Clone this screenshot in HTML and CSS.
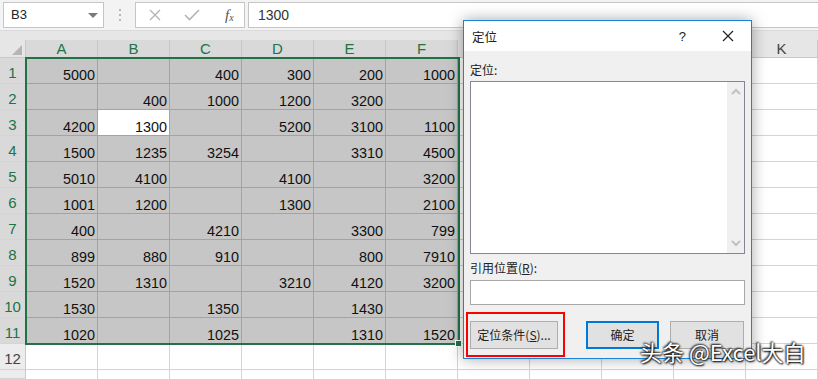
FILE: index.html
```html
<!DOCTYPE html>
<html lang="zh-CN">
<head>
    <meta charset="UTF-8">
    <title>定位</title>
    <link rel="stylesheet" href="styles.css">
</head>
<body>
    <div class="formula-bar">
        <div class="name-box">B3<span class="caret"></span></div>
        <div class="grip"><i></i><i></i><i></i></div>
        <div class="fn-box">
            <svg class="fn-icon" width="12" height="12" viewBox="0 0 12 12"><path d="M1 1L11 11M11 1L1 11" stroke="#b4b4b4" stroke-width="1.4" fill="none"/></svg>
            <svg class="fn-icon" width="16" height="12" viewBox="0 0 16 12"><path d="M1 6L5.5 10.5L15 1" stroke="#b4b4b4" stroke-width="1.6" fill="none"/></svg>
            <span class="fx">f<sub>x</sub></span>
        </div>
        <div class="formula-input">1300</div>
    </div>
    <div class="strip"></div>

    <div class="sheet" id="sheet">
        <div class="selection"></div>
        <div class="fill-handle"></div>
    </div>

    <div class="dialog">
        <div class="dialog-title">
            <span>定位</span>
            <span class="help">?</span>
            <svg class="close" width="12" height="12" viewBox="0 0 12 12"><path d="M1 1L11 11M11 1L1 11" stroke="#222" stroke-width="1.2" fill="none"/></svg>
        </div>
        <div class="dialog-body">
            <div class="label">定位:</div>
            <div class="listbox">
                <div class="scroll">
                    <svg width="10" height="7" viewBox="0 0 10 7"><path d="M1 6L5 2L9 6" stroke="#c2c2c2" stroke-width="2" fill="none"/></svg>
                    <svg width="10" height="7" viewBox="0 0 10 7"><path d="M1 1L5 5L9 1" stroke="#c2c2c2" stroke-width="2" fill="none"/></svg>
                </div>
            </div>
            <div class="label ref-label">引用位置(<u>R</u>):</div>
            <div class="ref-input"></div>
            <div class="buttons">
                <div class="special-wrap">
                    <div class="btn special">定位条件(<u>S</u>)...</div>
                </div>
                <div class="btn ok">确定</div>
                <div class="btn cancel">取消</div>
            </div>
        </div>
    </div>

    <div class="watermark">头条 @Excel大白</div>

    <script>
        // 表格数据，空字符串表示空单元格
        const data = [
            ['5000', '', '400', '300', '200', '1000'],
            ['', '400', '1000', '1200', '3200', ''],
            ['4200', '1300', '', '5200', '3100', '1100'],
            ['1500', '1235', '3254', '', '3310', '4500'],
            ['5010', '4100', '', '4100', '', '3200'],
            ['1001', '1200', '', '1300', '', '2100'],
            ['400', '', '4210', '', '3300', '799'],
            ['899', '880', '910', '', '800', '7910'],
            ['1520', '1310', '', '3210', '4120', '3200'],
            ['1530', '', '1350', '', '1430', ''],
            ['1020', '', '1025', '', '1310', '1520']
        ];
        const cols = 'ABCDEFGHIJK'.split('');
        const sheet = document.getElementById('sheet');

        function cell(cls, text) {
            const el = document.createElement('div');
            el.className = cls;
            el.textContent = text || '';
            sheet.appendChild(el);
        }

        // 列标题
        cell('corner');
        cols.forEach((c, i) => cell('col-head' + (i < 6 ? ' sel' : ''), c));

        // 行（第13行只露出上沿，不写行号）
        for (let r = 0; r < 13; r++) {
            cell('row-head' + (r < 11 ? ' sel' : ''), r < 12 ? r + 1 : '');
            cols.forEach((c, i) => {
                const inRange = r < 11 && i < 6;
                let cls = 'cell';
                if (inRange) cls += ' sel';
                if (r === 2 && i === 1) cls += ' active';
                cell(cls, inRange ? data[r][i] : '');
            });
        }
    </script>
</body>
</html>
```

FILE: styles.css
```css
body {
    margin: 0;
    width: 818px;
    height: 379px;
    overflow: hidden;
    position: relative;
    background: #fff;
    font-family: "Liberation Sans", "Noto Sans CJK SC", sans-serif;
    color: #222;
}

/* 编辑栏 */
.formula-bar {
    height: 30px;
    display: flex;
    align-items: center;
    padding-left: 3px;
    background: #f3f3f3;
    box-sizing: border-box;
}
.name-box {
    width: 101px;
    height: 26px;
    box-sizing: border-box;
    border: 1px solid #c6c6c6;
    background: #fff;
    font-size: 13px;
    line-height: 24px;
    padding-left: 7px;
    position: relative;
}
.caret {
    position: absolute;
    right: 5px;
    top: 10px;
    border-left: 5px solid transparent;
    border-right: 5px solid transparent;
    border-top: 5px solid #7a7a7a;
}
.grip {
    width: 31px;
    display: flex;
    flex-direction: column;
    align-items: center;
    gap: 3px;
}
.grip i {
    width: 2px;
    height: 2px;
    background: #b8b8b8;
}
.fn-box {
    width: 110px;
    height: 26px;
    box-sizing: border-box;
    border: 1px solid #c6c6c6;
    background: #fff;
    display: flex;
    align-items: center;
    padding-left: 13px;
    gap: 23px;
}
.fx {
    font-family: "Liberation Serif", serif;
    font-style: italic;
    font-size: 15px;
    color: #555;
    margin-left: 2px;
}
.fx sub {
    font-size: 10px;
    vertical-align: -1px;
}
.formula-input {
    flex: 1;
    height: 26px;
    margin-left: 3px;
    box-sizing: border-box;
    border: 1px solid #c6c6c6;
    border-right: none;
    background: #fff;
    font-size: 14px;
    line-height: 24px;
    padding-left: 9px;
    color: #333;
}
.strip {
    height: 10px;
    background: #e6e6e6;
    border-top: 1px solid #dadada;
    box-sizing: border-box;
}

/* 工作表 */
.sheet {
    display: grid;
    grid-template-columns: 26px repeat(11, 72px);
    grid-template-rows: 18px repeat(12, 26px) 9px;
    position: relative;
    overflow: hidden;
}
.sheet > div {
    box-sizing: border-box;
}
.corner {
    background: #e6e6e6;
    border-right: 1px solid #c8c8c8;
    border-bottom: 1px solid #c8c8c8;
    position: relative;
}
.corner::after {
    content: "";
    position: absolute;
    right: 3px;
    bottom: 2px;
    border-left: 10px solid transparent;
    border-bottom: 10px solid #b5b5b5;
}
.col-head {
    background: #e6e6e6;
    border-right: 1px solid #c8c8c8;
    border-bottom: 1px solid #c8c8c8;
    text-align: center;
    font-size: 15px;
    line-height: 18px;
    color: #444;
}
.row-head {
    background: #ececec;
    border-right: 1px solid #c8c8c8;
    border-bottom: 1px solid #d4d4d4;
    text-align: center;
    font-size: 15px;
    line-height: 30px;
    color: #444;
}
.col-head.sel, .row-head.sel {
    background: #d9d9d9;
    color: #217346;
}
.cell {
    border-right: 1px solid #d4d4d4;
    border-bottom: 1px solid #d4d4d4;
    font-size: 14.4px;
    text-align: right;
    padding: 9px 2px 0 0;
    line-height: 16px;
    color: #111;
}
.cell.sel {
    background: #c6c6c6;
    border-color: #a3a3a3;
}
.cell.active {
    background: #fff;
}
.selection {
    position: absolute;
    left: 25px;
    top: 17px;
    width: 435px;
    height: 288px;
    border: 2px solid #217346;
    box-sizing: border-box;
    z-index: 2;
}
.fill-handle {
    position: absolute;
    left: 455px;
    top: 300px;
    width: 7px;
    height: 7px;
    background: #217346;
    border: 1px solid #fff;
    z-index: 3;
}

/* 对话框 */
.dialog {
    position: absolute;
    left: 463px;
    top: 20px;
    width: 289px;
    height: 339px;
    box-sizing: border-box;
    border: 1px solid #1883d7;
    background: #f0f0f0;
    box-shadow: 0 0 14px rgba(0, 0, 0, 0.35);
    font-family: "Noto Sans CJK SC", sans-serif;
    font-size: 12px;
    z-index: 5;
}
.dialog-title {
    height: 30px;
    background: #fff;
    display: flex;
    align-items: center;
    padding-left: 8px;
    font-size: 12.5px;
}
.help {
    margin-left: auto;
    margin-right: 36px;
    font-family: "Liberation Sans", sans-serif;
    font-size: 13px;
}
.close {
    margin-right: 17px;
}
.dialog-body {
    padding: 0 6px;
}
.label {
    height: 30px;
    line-height: 38px;
}
.listbox {
    height: 173px;
    box-sizing: border-box;
    border: 1px solid #828790;
    background: #fff;
    display: flex;
    justify-content: flex-end;
}
.scroll {
    width: 17px;
    background: #f0f0f0;
    display: flex;
    flex-direction: column;
    justify-content: space-between;
    align-items: center;
    padding: 6px 0;
}
.ref-label {
    height: 26px;
    line-height: 28px;
}
.ref-input {
    height: 25px;
    box-sizing: border-box;
    border: 1px solid #a8a8a8;
    background: #fff;
}
.buttons {
    display: flex;
    align-items: center;
    margin-top: 7px;
    margin-left: -4px;
}
.special-wrap {
    border: 2px solid #f00;
    padding: 7px 5px 6px 2px;
}
.btn {
    height: 28px;
    box-sizing: border-box;
    border: 1px solid #adadad;
    background: #e1e1e1;
    text-align: center;
    line-height: 26px;
}
.special {
    width: 88px;
}
.ok {
    width: 73px;
    margin-left: 21px;
    border: 2px solid #0078d7;
    line-height: 24px;
}
.cancel {
    width: 74px;
    margin-left: 11px;
}

.watermark {
    position: absolute;
    left: 640px;
    top: 337px;
    font-family: "Noto Sans CJK SC", sans-serif;
    font-size: 22px;
    line-height: 28px;
    color: #fff;
    text-shadow: 0 0 2px #000, 1px 1px 2px #000, -1px -1px 2px #333;
    z-index: 6;
    white-space: nowrap;
}
```
